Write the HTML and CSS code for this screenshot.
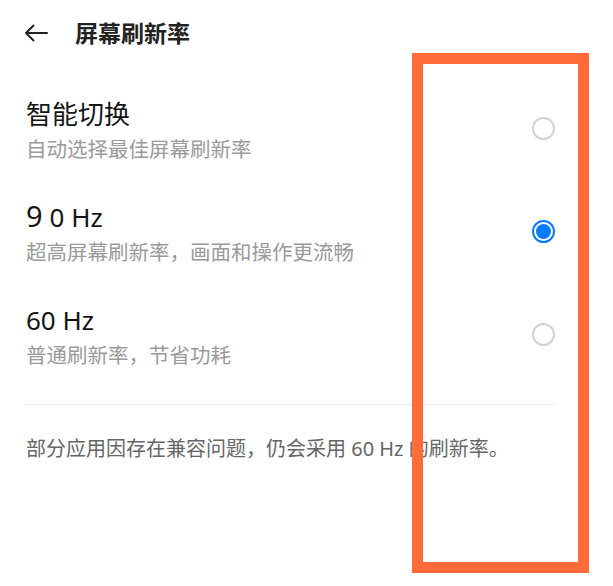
FILE: index.html
```html
<!DOCTYPE html>
<html lang="zh-CN">
<head>
<meta charset="utf-8">
<link rel="stylesheet" href="styles.css">
</head>
<body>
<div class="page">
  <header class="header">
    <svg class="back" width="24" height="18" viewBox="0 0 24 18">
      <path d="M23 9H2M9.5 1.5L2 9l7.5 7.5" fill="none" stroke="#222" stroke-width="2" stroke-linecap="round" stroke-linejoin="round"/>
    </svg>
    <h1 class="title">屏幕刷新率</h1>
  </header>
  <div class="list">
    <div class="item">
      <div class="text">
        <div class="name">智能切换</div>
        <div class="desc">自动选择最佳屏幕刷新率</div>
      </div>
      <span class="radio"></span>
    </div>
    <div class="item">
      <div class="text">
        <div class="name"><span class="nine">9</span>0 Hz</div>
        <div class="desc">超高屏幕刷新率，画面和操作更流畅</div>
      </div>
      <span class="radio checked"></span>
    </div>
    <div class="item">
      <div class="text">
        <div class="name">60 Hz</div>
        <div class="desc">普通刷新率，节省功耗</div>
      </div>
      <span class="radio"></span>
    </div>
  </div>
  <div class="divider"></div>
  <p class="note">部分应用因存在兼容问题，仍会采用 60 Hz 的刷新率。</p>
  <div class="highlight"></div>
</div>
</body>
</html>
```

FILE: styles.css
```css
html, body {
  margin: 0;
  padding: 0;
  background: #fff;
}
body {
  font-family: "Noto Sans", "Noto Sans CJK SC", sans-serif;
  color: #1a1a1a;
}
.page {
  position: relative;
  width: 613px;
  height: 586px;
  overflow: hidden;
  padding: 0 58px 0 26px;
  box-sizing: border-box;
}
.header {
  height: 66px;
  display: flex;
  align-items: center;
}
.back {
  margin-left: -2px;
  margin-top: -1px;
}
.title {
  margin: 0 0 0 27px;
  font-size: 23px;
  font-weight: 700;
  color: #222;
  line-height: 30px;
}
.list {
  padding-top: 13px;
}
.item {
  display: flex;
  align-items: center;
  justify-content: space-between;
  padding: 18px 0 19px;
}
.name {
  font-size: 26px;
  line-height: 34px;
  color: #151515;
}
.nine {
  font-size: 29px;
  margin-right: 7px;
  line-height: 30px;
}
.desc {
  margin-top: 4px;
  font-size: 20.5px;
  line-height: 28px;
  color: #9a9a9a;
}
.radio {
  width: 23px;
  height: 23px;
  box-sizing: border-box;
  border: 2px solid #d2d2d2;
  border-radius: 50%;
  margin-top: -4px;
  position: relative;
}
.radio.checked {
  border-color: #0a7aff;
}
.radio.checked::after {
  content: "";
  position: absolute;
  left: 2px;
  top: 2px;
  width: 15px;
  height: 15px;
  border-radius: 50%;
  background: #0a7aff;
}
.divider {
  margin-top: 16px;
  height: 1px;
  background: #ececec;
}
.note {
  margin: 30px 0 0;
  font-size: 20px;
  line-height: 28px;
  color: #666;
}
.highlight {
  position: absolute;
  left: 412px;
  top: 53px;
  width: 177px;
  height: 520px;
  box-sizing: border-box;
  border: 11px solid #ff6c3a;
}
```
